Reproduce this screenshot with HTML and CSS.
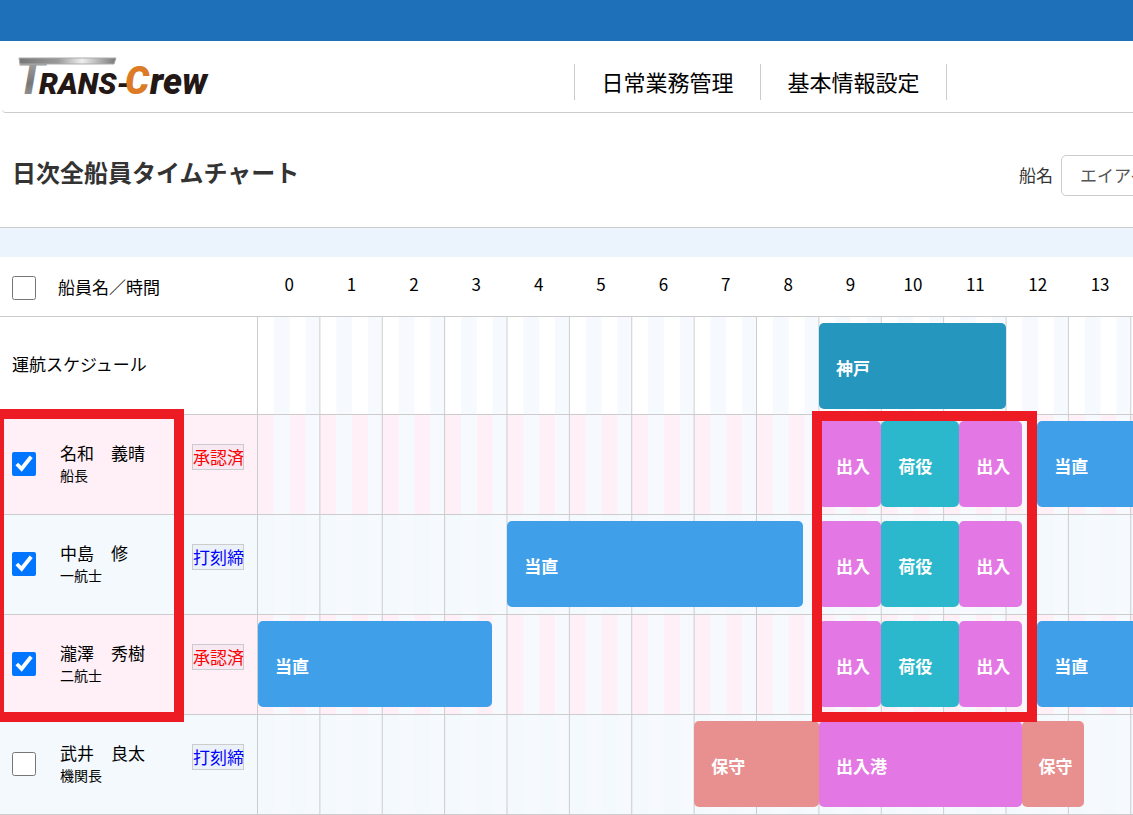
FILE: index.html
```
<!DOCTYPE html>
<html lang="ja">

<head>
    <meta charset="UTF-8">
    <meta name="viewport" content="width=device-width, initial-scale=1.0">
    <title>日次全船員タイムチャート</title>
    <link rel="stylesheet" href="styles.css">
</head>

<body>

    <div class="top-bar"></div>

    <header class="site-header">
        <a href="#" class="logo">
            <svg width="200" height="44" viewBox="0 0 200 44" role="img" aria-label="TRANS-Crew">
                <defs>
                    <linearGradient id="steel" x1="0" y1="0" x2="1" y2="0">
                        <stop offset="0" stop-color="#777"/>
                        <stop offset="0.4" stop-color="#999"/>
                        <stop offset="0.65" stop-color="#eee"/>
                        <stop offset="1" stop-color="#777"/>
                    </linearGradient>
                    <linearGradient id="stem" x1="0" y1="0" x2="0" y2="1">
                        <stop offset="0" stop-color="#bbb"/>
                        <stop offset="0.6" stop-color="#777"/>
                        <stop offset="1" stop-color="#aaa"/>
                    </linearGradient>
                </defs>
                <text class="logo-t" x="0" y="39" fill="url(#stem)">T</text>
                <path d="M3 3H100L98 9H4Z" fill="url(#steel)" stroke="#aaa" stroke-width="1"/>
                <text class="logo-text" x="23" y="39">RANS-</text>
                <text class="logo-c" x="109" y="39">C</text>
                <text class="logo-rew" x="134" y="39">rew</text>
            </svg>
        </a>
        <nav class="main-nav">
            <a href="#">日常業務管理</a>
            <a href="#">基本情報設定</a>
        </nav>
    </header>

    <div class="page-head">
        <h1>日次全船員タイムチャート</h1>
        <form class="ship-form">
            <label for="ship">船名</label>
            <select id="ship">
                <option>エイアイ丸</option>
            </select>
        </form>
    </div>

    <div class="band"></div>

    <div class="chart">
        <table>
            <colgroup>
                <col class="col-check">
                <col class="col-name">
                <col class="col-status">
                <col span="24">
            </colgroup>
            <thead>
                <tr>
                    <th class="check"><input type="checkbox" aria-label="全員を選択"></th>
                    <th class="name-head" colspan="2">船員名／時間</th>
                    <th>0</th>
                    <th>1</th>
                    <th>2</th>
                    <th>3</th>
                    <th>4</th>
                    <th>5</th>
                    <th>6</th>
                    <th>7</th>
                    <th>8</th>
                    <th>9</th>
                    <th>10</th>
                    <th>11</th>
                    <th>12</th>
                    <th>13</th>
                    <th>14</th>
                    <th>15</th>
                    <th>16</th>
                    <th>17</th>
                    <th>18</th>
                    <th>19</th>
                    <th>20</th>
                    <th>21</th>
                    <th>22</th>
                    <th>23</th>
                </tr>
            </thead>
            <tbody>
                <tr class="schedule">
                    <td class="schedule-name" colspan="3">運航スケジュール</td>
                    <td class="track" colspan="24">
                        <div class="bars">
                            <div class="bar port" style="grid-column: 37 / 49">神戸</div>
                        </div>
                    </td>
                </tr>
                <tr class="approved">
                    <td class="check"><input type="checkbox" id="crew1" checked></td>
                    <td class="name"><label for="crew1">名和　義晴<small>船長</small></label></td>
                    <td class="status"><span>承認済</span></td>
                    <td class="track" colspan="24">
                        <div class="bars">
                            <div class="bar entry" style="grid-column: 37 / 41">出入</div>
                            <div class="bar cargo" style="grid-column: 41 / 46">荷役</div>
                            <div class="bar entry" style="grid-column: 46 / 50">出入</div>
                            <div class="bar watch" style="grid-column: 51 / 66">当直</div>
                        </div>
                    </td>
                </tr>
                <tr class="closed">
                    <td class="check"><input type="checkbox" id="crew2" checked></td>
                    <td class="name"><label for="crew2">中島　修<small>一航士</small></label></td>
                    <td class="status"><span>打刻締</span></td>
                    <td class="track" colspan="24">
                        <div class="bars">
                            <div class="bar watch" style="grid-column: 17 / 36">当直</div>
                            <div class="bar entry" style="grid-column: 37 / 41">出入</div>
                            <div class="bar cargo" style="grid-column: 41 / 46">荷役</div>
                            <div class="bar entry" style="grid-column: 46 / 50">出入</div>
                        </div>
                    </td>
                </tr>
                <tr class="approved">
                    <td class="check"><input type="checkbox" id="crew3" checked></td>
                    <td class="name"><label for="crew3">瀧澤　秀樹<small>二航士</small></label></td>
                    <td class="status"><span>承認済</span></td>
                    <td class="track" colspan="24">
                        <div class="bars">
                            <div class="bar watch" style="grid-column: 1 / 16">当直</div>
                            <div class="bar entry" style="grid-column: 37 / 41">出入</div>
                            <div class="bar cargo" style="grid-column: 41 / 46">荷役</div>
                            <div class="bar entry" style="grid-column: 46 / 50">出入</div>
                            <div class="bar watch" style="grid-column: 51 / 66">当直</div>
                        </div>
                    </td>
                </tr>
                <tr class="closed">
                    <td class="check"><input type="checkbox" id="crew4"></td>
                    <td class="name"><label for="crew4">武井　良太<small>機関長</small></label></td>
                    <td class="status"><span>打刻締</span></td>
                    <td class="track" colspan="24">
                        <div class="bars">
                            <div class="bar upkeep" style="grid-column: 29 / 37">保守</div>
                            <div class="bar entry" style="grid-column: 37 / 50">出入港</div>
                            <div class="bar upkeep" style="grid-column: 50 / 54">保守</div>
                        </div>
                    </td>
                </tr>
            </tbody>
        </table>
        <div class="mark mark-crew"></div>
        <div class="mark mark-work"></div>
    </div>

</body>

</html>
```

FILE: styles.css
```
* {
    box-sizing: border-box;
}

body {
    margin: 0;
    background: #ffffff;
    font-family: 'Noto Sans CJK JP', sans-serif;
    font-size: 17px;
    line-height: 24px;
    color: #000000;
    overflow-x: hidden;
}

.top-bar {
    height: 41px;
    background: #1e70b9;
}

.site-header {
    display: flex;
    align-items: center;
    height: 72px;
    margin-left: 2px;
    padding-left: 14px;
    border-bottom: 1px solid #cccccc;
    border-bottom-left-radius: 4px;
}

.logo {
    display: block;
    height: 44px;
}

.logo svg {
    overflow: visible;
}

.logo text {
    font-family: Roboto, sans-serif;
    font-weight: 900;
    font-style: italic;
}

.logo .logo-t {
    font-size: 48px;
    font-weight: bold;
}

.logo-text {
    font-size: 30px;
    fill: #231815;
}

.logo-c {
    font-size: 38px;
    fill: #dc7a26;
}

.logo-rew {
    font-size: 36px;
    fill: #231815;
}

.main-nav {
    display: flex;
    margin-top: 10px;
    margin-left: 358px;
    border-left: 1px solid #cccccc;
}

.main-nav a {
    width: 186px;
    padding-bottom: 2px;
    border-right: 1px solid #cccccc;
    color: #000000;
    font-size: 22px;
    line-height: 34px;
    text-align: center;
    text-decoration: none;
}

.page-head {
    display: flex;
    align-items: center;
    height: 115px;
    padding-left: 12px;
    border-bottom: 1px solid #cccccc;
}

h1 {
    margin: 4px 0 0;
    color: #333333;
    font-size: 24px;
    font-weight: bold;
}

.ship-form {
    display: flex;
    align-items: center;
    gap: 8px;
    margin: 10px -88px 0 auto;
    color: #333333;
}

.ship-form select {
    appearance: none;
    width: 160px;
    height: 41px;
    padding: 0 18px;
    border: 1px solid #cccccc;
    border-radius: 5px;
    background: #ffffff;
    color: #555555;
    font: inherit;
}

.band {
    height: 29px;
    background: #ebf4fc;
}

.chart {
    position: relative;
    overflow: hidden;
}

table {
    width: 1754px;
    table-layout: fixed;
    border-spacing: 0;
}

.col-check {
    width: 48px;
}

.col-name {
    width: 136px;
}

.col-status {
    width: 73px;
}

th,
td {
    padding: 0;
    border-bottom: 1px solid #cccccc;
    text-align: left;
}

th {
    height: 60px;
    padding: 0 0 6px 2px;
    font-weight: normal;
    text-align: center;
}

th.name-head {
    padding: 0 0 0 10px;
    text-align: left;
}

td {
    height: 100px;
}

.schedule td {
    height: 98px;
}

.schedule .schedule-name {
    padding: 0 0 4px 12px;
}

.check,
th.check {
    padding: 2px 0 0 12px;
    text-align: left;
}

td.check {
    padding: 0 0 2px 12px;
}

.check input {
    display: block;
    width: 24px;
    height: 24px;
    margin: 0;
}

.name {
    padding: 0 0 4px 12px;
}

.name label {
    display: block;
}

.name small {
    display: block;
    font-size: 14px;
    line-height: 20px;
}

.status {
    padding: 0 0 16px 8px;
}

.status span {
    display: block;
    width: 52px;
    border: 1px solid #cccccc;
    background: rgba(0, 0, 80, 0.03);
    white-space: nowrap;
}

.approved td {
    background-color: #fff0f7;
}

.approved .status {
    color: #ff0000;
}

.closed td {
    background-color: #f3f9fd;
}

.closed .status {
    color: #0000ff;
}

/* one tile is one hour: a line, then quarter-hour stripes */
.track {
    background-image:
        linear-gradient(90deg, #cccccc 1px, transparent 1px),
        linear-gradient(90deg, transparent 27%, #f6faff 27%, #f6faff 52%, transparent 52%, transparent 77%, #f6faff 77%);
    background-size: calc(100% / 24) 100%;
    vertical-align: top;
}

.bars {
    display: grid;
    grid-template-columns: repeat(96, 1fr);
    margin-left: 1px;
    padding-top: 6px;
}

.bar {
    min-width: 0;
    height: 86px;
    padding: 2px 0 0 17px;
    border-radius: 5px;
    color: #ffffff;
    font-weight: bold;
    line-height: 86px;
    white-space: nowrap;
}

.port {
    background: #2596be;
}

.entry {
    background: #e377e3;
}

.cargo {
    background: #2cb8cc;
}

.watch {
    background: #3f9fe9;
}

.upkeep {
    background: #e88f8f;
}

/* red frames over the chart */
.mark {
    position: absolute;
    border: 10px solid #ed1c24;
    pointer-events: none;
}

.mark-crew {
    top: 152px;
    left: -6px;
    width: 190px;
    height: 313px;
}

.mark-work {
    top: 154px;
    left: 812px;
    width: 225px;
    height: 311px;
}
```
